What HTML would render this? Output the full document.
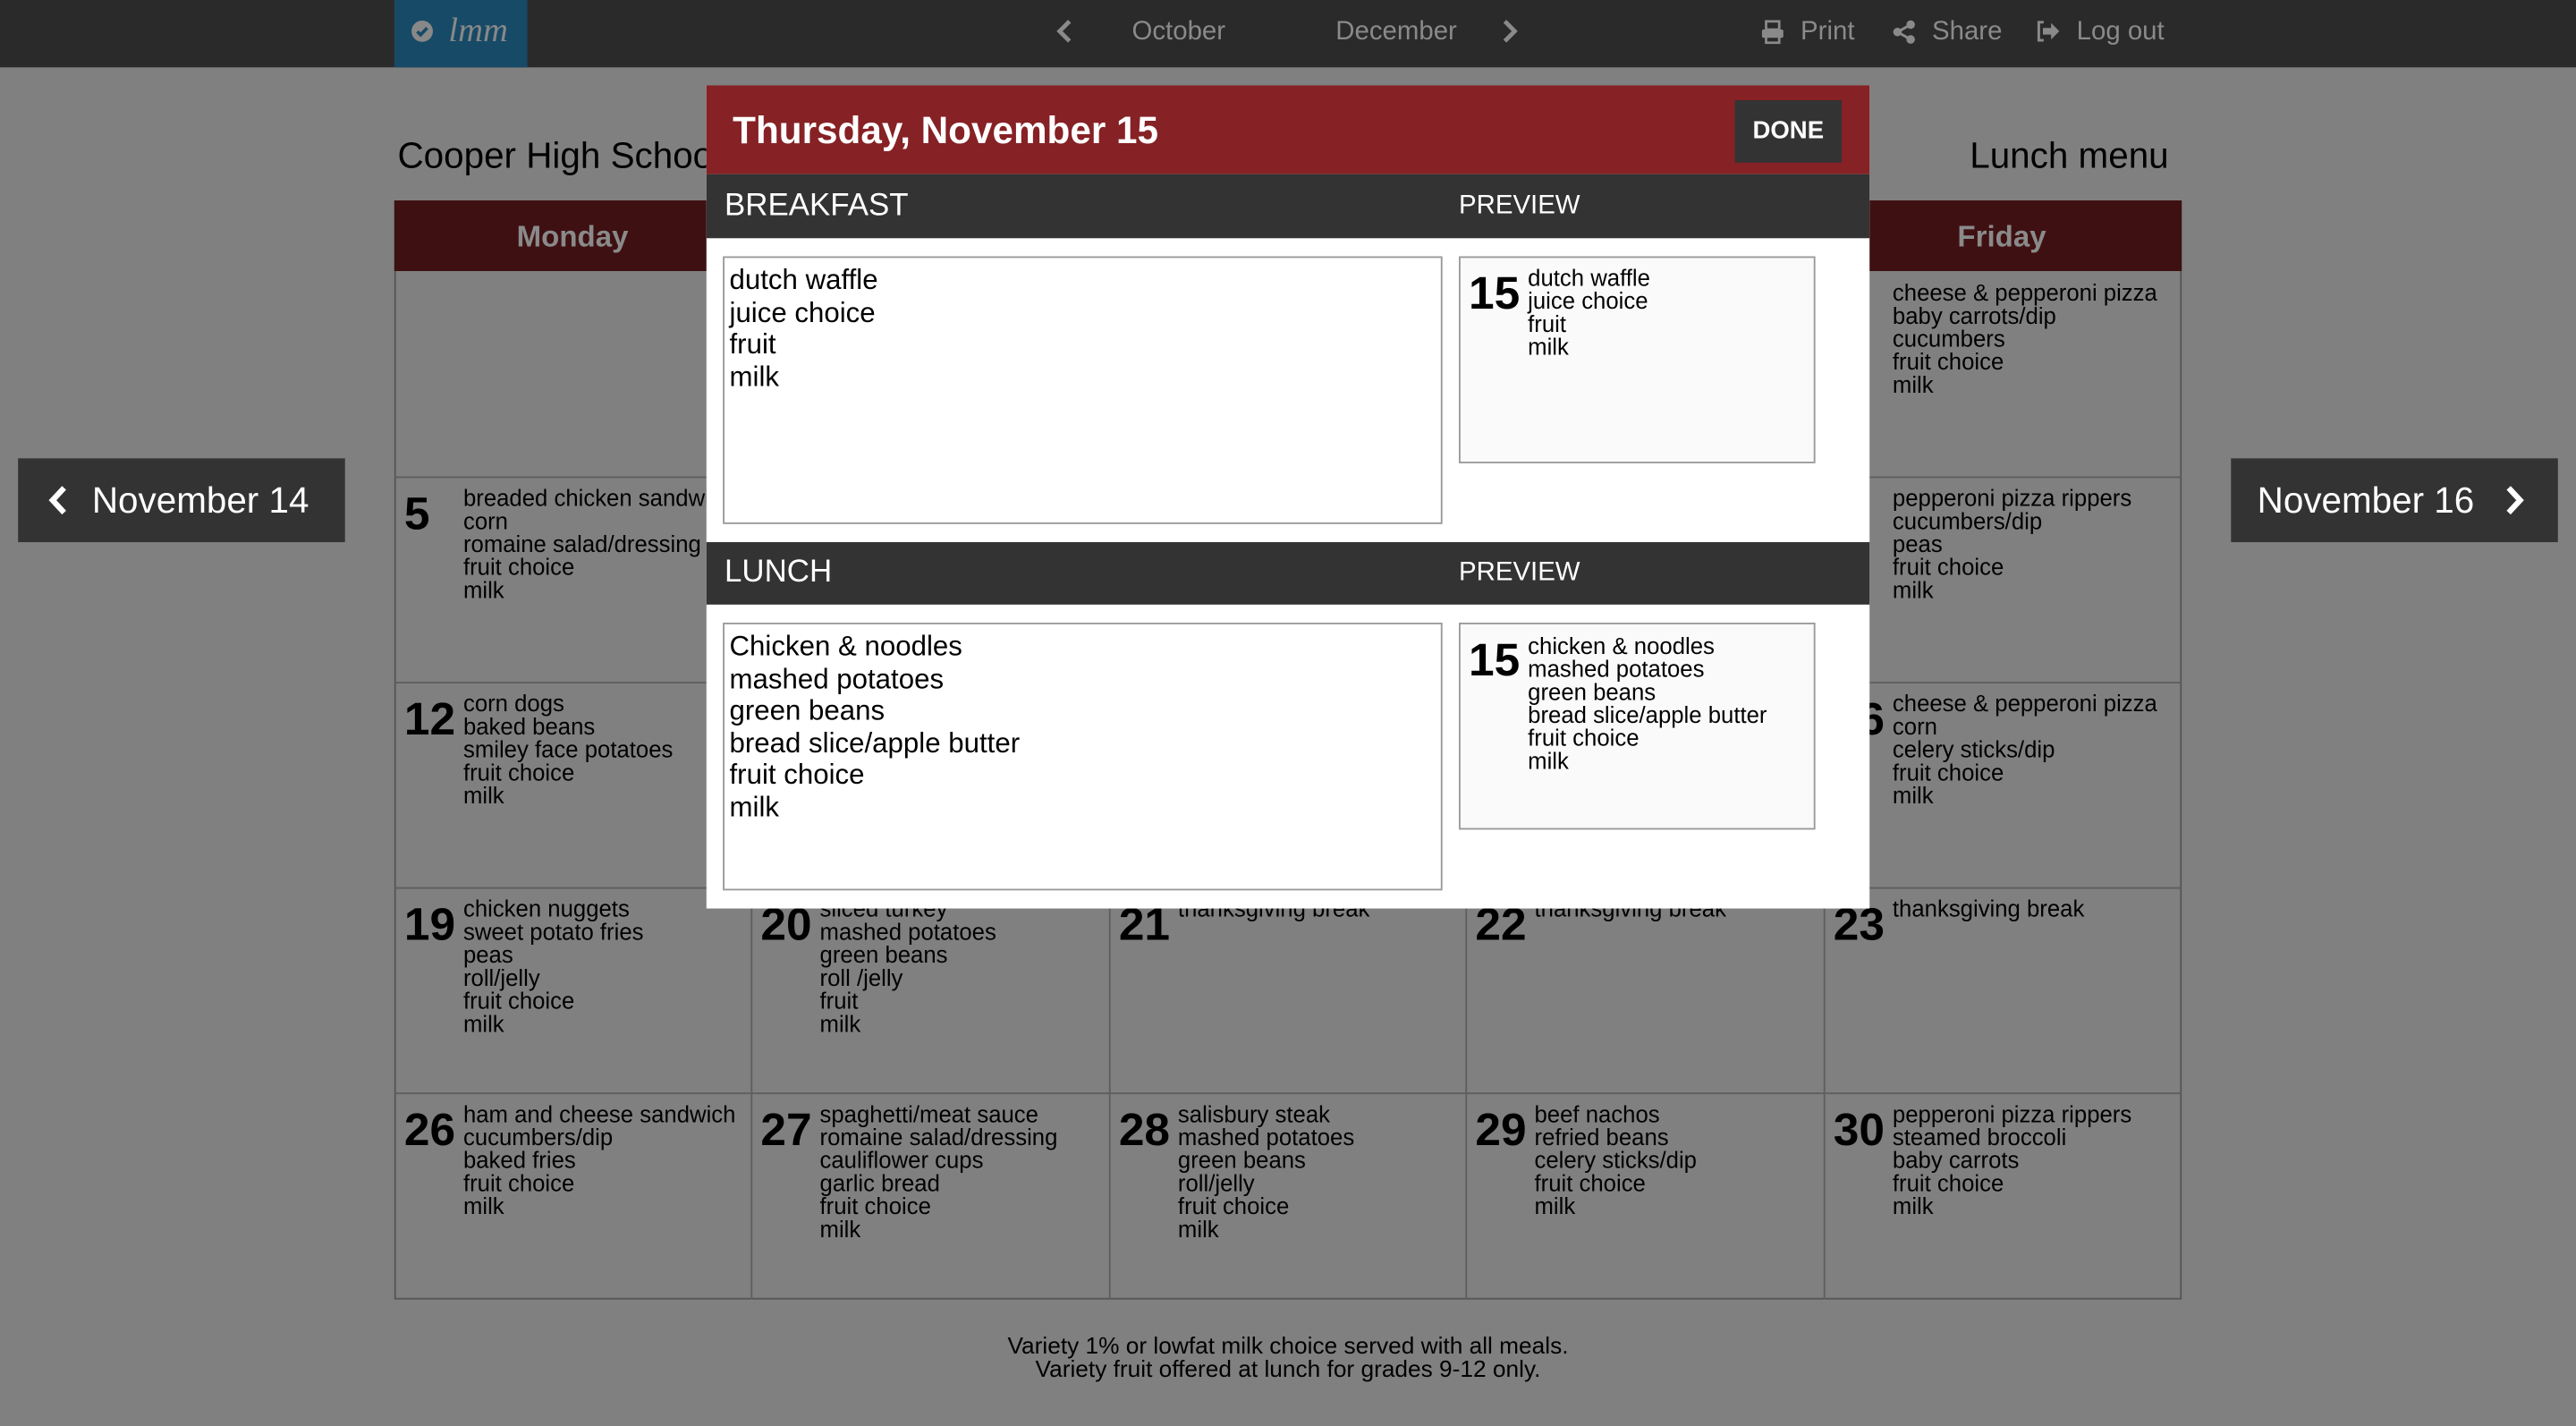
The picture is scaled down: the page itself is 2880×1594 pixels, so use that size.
<!DOCTYPE html>
<html><head><meta charset="utf-8"><style>
html,body{margin:0;padding:0;width:2880px;height:1594px;overflow:hidden;background:#808080}
#w{position:absolute;left:0;top:0;width:1568px;height:868px;transform:scale(1.83673,1.83641);transform-origin:0 0;font-family:"Liberation Sans",sans-serif;background:#808080}
.a{position:absolute}
.top{left:0;top:0;width:1568px;height:41px;background:#2a2a2a}
.nav{color:#8a8a8a;font-size:16px;top:11px;line-height:18px}
.cal{left:240px;top:122px;width:1088px;height:669px;border:1px solid #555;box-sizing:border-box}
.hd{left:240px;top:122px;width:1088px;height:43px;background:#3f1012}
.day{color:#8a8a8a;font-size:18px;font-weight:bold;top:134px;width:217px;text-align:center}
.cell{font-size:14px;line-height:14px;color:#000}
.num{font-size:28px;font-weight:bold;line-height:28px;position:absolute;color:#000}
.it{position:absolute;white-space:nowrap}
.side{background:#333;color:#fff;font-size:22px;height:51px;line-height:51px;top:279px}
</style></head><body><div id="w">
<div class="a top"></div>
<div class="a" style="left:240px;top:0;width:81px;height:41px;background:#174a66"></div>
<svg class="a" style="left:250px;top:12px" width="14" height="14" viewBox="0 0 14 14"><circle cx="7" cy="7" r="6.5" fill="#888"/><path d="M4 7.2l2 2 4-4.2" stroke="#174a66" stroke-width="2" fill="none"/></svg>
<div class="a" style="left:273px;top:6px;color:#888;font-size:21px;font-style:italic;font-family:'Liberation Serif',serif">lmm</div>
<svg class="a" style="left:643px;top:12px" width="10" height="14" viewBox="0 0 10 14"><path d="M8 1L2 7l6 6" stroke="#8a8a8a" stroke-width="2.6" fill="none"/></svg>
<div class="a nav" style="left:689px">October</div>
<div class="a nav" style="left:813px">December</div>
<svg class="a" style="left:914px;top:12px" width="10" height="14" viewBox="0 0 10 14"><path d="M2 1l6 6-6 6" stroke="#8a8a8a" stroke-width="2.6" fill="none"/></svg>
<svg class="a" style="left:1072px;top:12px" width="14" height="15" viewBox="0 0 14 15"><rect x="3" y="1" width="8" height="5" fill="none" stroke="#8a8a8a" stroke-width="1.5"/><rect x="0.5" y="6" width="13" height="5" rx="1" fill="#8a8a8a"/><rect x="3" y="10" width="8" height="4" fill="none" stroke="#8a8a8a" stroke-width="1.5"/></svg>
<div class="a nav" style="left:1096px">Print</div>
<svg class="a" style="left:1152px;top:12px" width="14" height="15" viewBox="0 0 14 15"><circle cx="11" cy="3" r="2.6" fill="#8a8a8a"/><circle cx="3" cy="7.5" r="2.6" fill="#8a8a8a"/><circle cx="11" cy="12" r="2.6" fill="#8a8a8a"/><path d="M11 3L3 7.5l8 4.5" stroke="#8a8a8a" stroke-width="1.6" fill="none"/></svg>
<div class="a nav" style="left:1176px">Share</div>
<svg class="a" style="left:1239px;top:12px" width="15" height="14" viewBox="0 0 15 14"><path d="M5 1.5H2v11h3" stroke="#8a8a8a" stroke-width="1.6" fill="none"/><path d="M4.5 5h5V2l5 5-5 5V9h-5z" fill="#8a8a8a"/></svg>
<div class="a nav" style="left:1264px">Log out</div>
<div class="a" style="left:242px;top:82px;font-size:22px;color:#000">Cooper High School</div>
<div class="a" style="left:1199px;top:82px;font-size:22px;color:#000">Lunch menu</div>
<div class="a cal"></div>
<div class="a hd"></div>
<div class="a day" style="left:240px">Monday</div>
<div class="a day" style="left:1110px">Friday</div>
<div class="a" style="left:240px;top:290px;width:1088px;height:1px;background:#5e5e5e"></div>
<div class="a" style="left:240px;top:415px;width:1088px;height:1px;background:#5e5e5e"></div>
<div class="a" style="left:240px;top:540px;width:1088px;height:1px;background:#5e5e5e"></div>
<div class="a" style="left:240px;top:665px;width:1088px;height:1px;background:#5e5e5e"></div>
<div class="a" style="left:457px;top:165px;width:1px;height:626px;background:#5e5e5e"></div>
<div class="a" style="left:675px;top:165px;width:1px;height:626px;background:#5e5e5e"></div>
<div class="a" style="left:892px;top:165px;width:1px;height:626px;background:#5e5e5e"></div>
<div class="a" style="left:1110px;top:165px;width:1px;height:626px;background:#5e5e5e"></div>

<div class="a cell" style="left:0;top:0">
<div class="it" style="left:1152px;top:171px">cheese &amp; pepperoni pizza<br>baby carrots/dip<br>cucumbers<br>fruit choice<br>milk</div>
<div class="num" style="left:246px;top:299px">5</div><div class="it" style="left:282px;top:296px">breaded chicken sandwich<br>corn<br>romaine salad/dressing<br>fruit choice<br>milk</div>
<div class="it" style="left:1152px;top:296px">pepperoni pizza rippers<br>cucumbers/dip<br>peas<br>fruit choice<br>milk</div>
<div class="num" style="left:246px;top:424px">12</div><div class="it" style="left:282px;top:421px">corn dogs<br>baked beans<br>smiley face potatoes<br>fruit choice<br>milk</div>
<div class="num" style="left:1116px;top:424px">16</div><div class="it" style="left:1152px;top:421px">cheese &amp; pepperoni pizza<br>corn<br>celery sticks/dip<br>fruit choice<br>milk</div>
<div class="num" style="left:246px;top:549px">19</div><div class="it" style="left:282px;top:546px">chicken nuggets<br>sweet potato fries<br>peas<br>roll/jelly<br>fruit choice<br>milk</div>
<div class="num" style="left:463px;top:549px">20</div><div class="it" style="left:499px;top:546px">sliced turkey<br>mashed potatoes<br>green beans<br>roll /jelly<br>fruit<br>milk</div>
<div class="num" style="left:681px;top:549px">21</div><div class="it" style="left:717px;top:546px">thanksgiving break</div>
<div class="num" style="left:898px;top:549px">22</div><div class="it" style="left:934px;top:546px">thanksgiving break</div>
<div class="num" style="left:1116px;top:549px">23</div><div class="it" style="left:1152px;top:546px">thanksgiving break</div>
<div class="num" style="left:246px;top:674px">26</div><div class="it" style="left:282px;top:671px">ham and cheese sandwich<br>cucumbers/dip<br>baked fries<br>fruit choice<br>milk</div>
<div class="num" style="left:463px;top:674px">27</div><div class="it" style="left:499px;top:671px">spaghetti/meat sauce<br>romaine salad/dressing<br>cauliflower cups<br>garlic bread<br>fruit choice<br>milk</div>
<div class="num" style="left:681px;top:674px">28</div><div class="it" style="left:717px;top:671px">salisbury steak<br>mashed potatoes<br>green beans<br>roll/jelly<br>fruit choice<br>milk</div>
<div class="num" style="left:898px;top:674px">29</div><div class="it" style="left:934px;top:671px">beef nachos<br>refried beans<br>celery sticks/dip<br>fruit choice<br>milk</div>
<div class="num" style="left:1116px;top:674px">30</div><div class="it" style="left:1152px;top:671px">pepperoni pizza rippers<br>steamed broccoli<br>baby carrots<br>fruit choice<br>milk</div>
</div>
<div class="a" style="left:0;width:1568px;top:813px;text-align:center;font-size:14.3px;line-height:14px;color:#000">Variety 1% or lowfat milk choice served with all meals.<br>Variety fruit offered at lunch for grades 9-12 only.</div>

<div class="a side" style="left:11px;width:199px"><svg style="position:absolute;left:18px;top:16px" width="12" height="19" viewBox="0 0 12 19"><path d="M10 2L3 9.5l7 7.5" stroke="#fff" stroke-width="3.4" fill="none"/></svg><span style="position:absolute;left:45px">November 14</span></div>
<div class="a side" style="left:1358px;width:199px"><span style="position:absolute;left:16px">November 16</span><svg style="position:absolute;left:167px;top:16px" width="12" height="19" viewBox="0 0 12 19"><path d="M2 2l7 7.5L2 17" stroke="#fff" stroke-width="3.4" fill="none"/></svg></div>

<div class="a" style="left:430px;top:52px;width:708px;height:501px;background:#fff"></div>
<div class="a" style="left:430px;top:52px;width:708px;height:54px;background:#862125"></div>
<div class="a" style="left:446px;top:66px;color:#fff;font-size:23px;font-weight:bold">Thursday, November 15</div>
<div class="a" style="left:1056px;top:61px;width:65px;height:38px;background:#333;color:#fff;font-size:15px;font-weight:bold;text-align:center;line-height:38px">DONE</div>
<div class="a" style="left:430px;top:106px;width:708px;height:39px;background:#333"></div>
<div class="a" style="left:441px;top:115px;color:#fff;font-size:19px">BREAKFAST</div>
<div class="a" style="left:888px;top:117px;color:#fff;font-size:16px">PREVIEW</div>
<div class="a" style="left:440px;top:156px;width:438px;height:163px;border:1px solid #999;box-sizing:border-box;font-size:17px;line-height:19.6px;padding:4px 3px;color:#000">dutch waffle<br>juice choice<br>fruit<br>milk</div>
<div class="a" style="left:888px;top:156px;width:217px;height:126px;border:1px solid #999;box-sizing:border-box;background:#fafafa"></div>
<div class="a num" style="left:894px;top:165px">15</div>
<div class="a cell" style="left:930px;top:162px">dutch waffle<br>juice choice<br>fruit<br>milk</div>
<div class="a" style="left:430px;top:330px;width:708px;height:38px;background:#333"></div>
<div class="a" style="left:441px;top:338px;color:#fff;font-size:19px">LUNCH</div>
<div class="a" style="left:888px;top:340px;color:#fff;font-size:16px">PREVIEW</div>
<div class="a" style="left:440px;top:379px;width:438px;height:163px;border:1px solid #999;box-sizing:border-box;font-size:17px;line-height:19.6px;padding:4px 3px;color:#000">Chicken &amp; noodles<br>mashed potatoes<br>green beans<br>bread slice/apple butter<br>fruit choice<br>milk</div>
<div class="a" style="left:888px;top:379px;width:217px;height:126px;border:1px solid #999;box-sizing:border-box;background:#fafafa"></div>
<div class="a num" style="left:894px;top:388px">15</div>
<div class="a cell" style="left:930px;top:386px">chicken &amp; noodles<br>mashed potatoes<br>green beans<br>bread slice/apple butter<br>fruit choice<br>milk</div>
</div></body></html>
